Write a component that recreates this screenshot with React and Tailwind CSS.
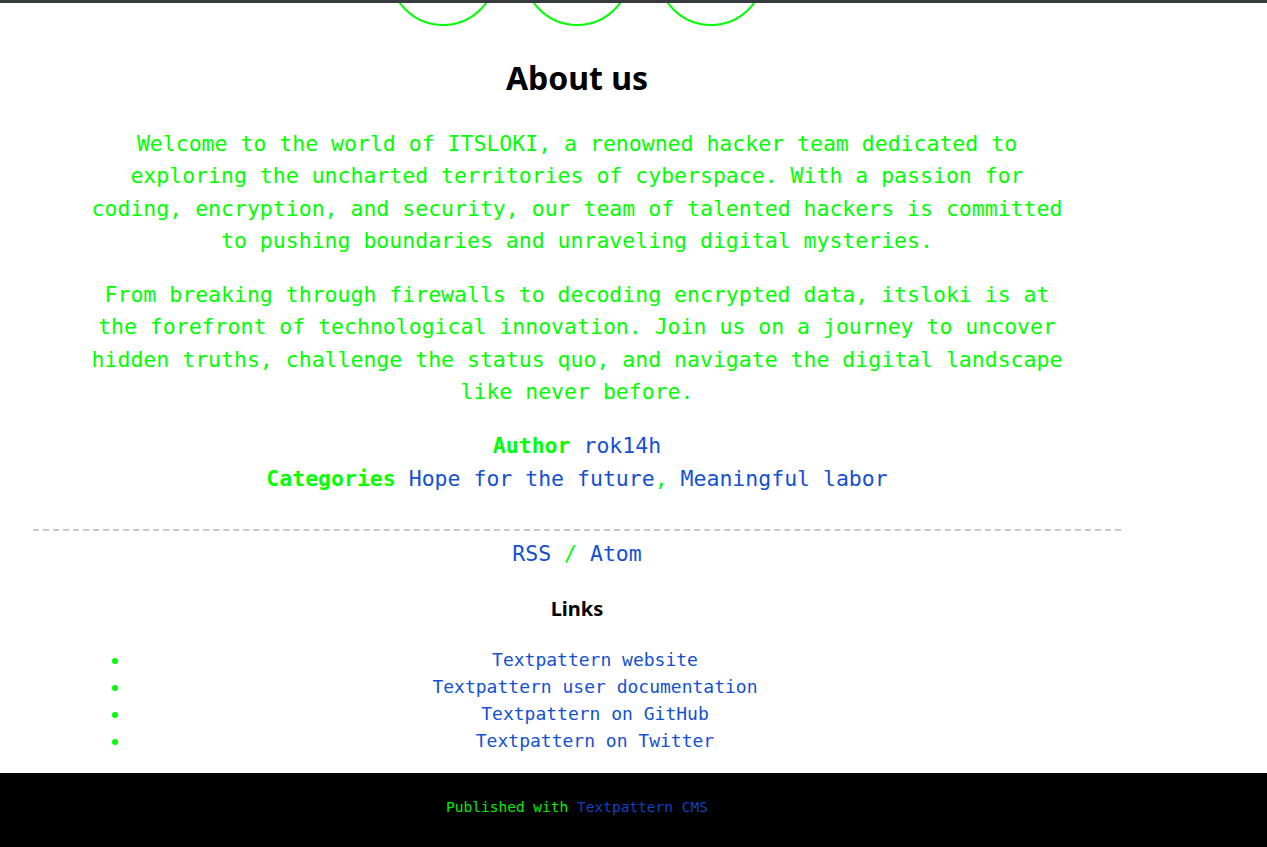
import React from "react";

const LINKS = [
  "Textpattern website",
  "Textpattern user documentation",
  "Textpattern on GitHub",
  "Textpattern on Twitter",
];

const mono = "font-['DejaVu_Sans_Mono','Liberation_Mono',monospace]";
const sans = "font-['Noto_Sans','Open_Sans',sans-serif]";

export default function App() {
  return (
    <div className="min-h-[847px] bg-white">
      {/* top edge of header */}
      <div className="relative z-10 h-[3px] bg-[#373a40]" />

      <div className="overflow-hidden">
        <div className="ml-[33px] w-[1088px]">
          {/* avatars */}
          <div className="-mt-[85px] flex justify-center gap-[26px]">
            <div className="h-[108px] w-[108px] rounded-full border-2 border-[#00ff00]" />
            <div className="h-[108px] w-[108px] rounded-full border-2 border-[#00ff00]" />
            <div className="h-[108px] w-[108px] rounded-full border-2 border-[#00ff00]" />
          </div>

          <h1 className={`${sans} mt-[33px] text-center text-[32px] font-bold leading-[38px] text-black`}>
            About us
          </h1>

          <div className={`${mono} mx-auto mt-[31px] w-[985px] text-center text-[21.5px] leading-[32.4px] text-[#00ff00]`}>
            <p>
              Welcome to the world of ITSLOKI, a renowned hacker team dedicated to exploring the uncharted
              territories of cyberspace. With a passion for coding, encryption, and security, our team of
              talented hackers is committed to pushing boundaries and unraveling digital mysteries.
            </p>
            <p className="mt-[21.4px]">
              From breaking through firewalls to decoding encrypted data, itsloki is at the forefront of
              technological innovation. Join us on a journey to uncover hidden truths, challenge the status
              quo, and navigate the digital landscape like never before.
            </p>

            <div className="mt-[20px] leading-[33px]">
              <p>
                <span className="font-bold">Author</span>{" "}
                <a className="text-[#1450d2]">rok14h</a>
              </p>
              <p>
                <span className="font-bold">Categories</span>{" "}
                <a className="text-[#1450d2]">Hope for the future</a>,{" "}
                <a className="text-[#1450d2]">Meaningful labor</a>
              </p>
            </div>
          </div>

          <div className="mt-[34.5px] border-t-2 border-dashed border-[#c8c8c8]" />

          <p className={`${mono} mt-[6.8px] text-center text-[21.5px] leading-[32.4px] text-[#00ff00]`}>
            <a className="text-[#1450d2]">RSS</a> / <a className="text-[#1450d2]">Atom</a>
          </p>

          <h4 className={`${sans} mt-[24px] text-center text-[20px] font-bold leading-[30px] text-black`}>
            Links
          </h4>

          <ul className={`${mono} ml-[56.5px] mt-[21.5px] w-[971px] list-disc pl-[40px] text-center text-[18px] leading-[27px] text-[#00ff00]`}>
            {LINKS.map((l) => (
              <li key={l}>
                <a className="text-[#1450d2]">{l}</a>
              </li>
            ))}
          </ul>
        </div>
      </div>

      <footer className={`${mono} mt-[19.5px] bg-black pb-[40px] pt-[23px] text-[14.5px] leading-[22px] text-[#00ee00]`}>
        <p className="ml-[33px] w-[1088px] text-center">
          Published with <a className="text-[#0c44c0]">Textpattern CMS</a>
        </p>
      </footer>
    </div>
  );
}
